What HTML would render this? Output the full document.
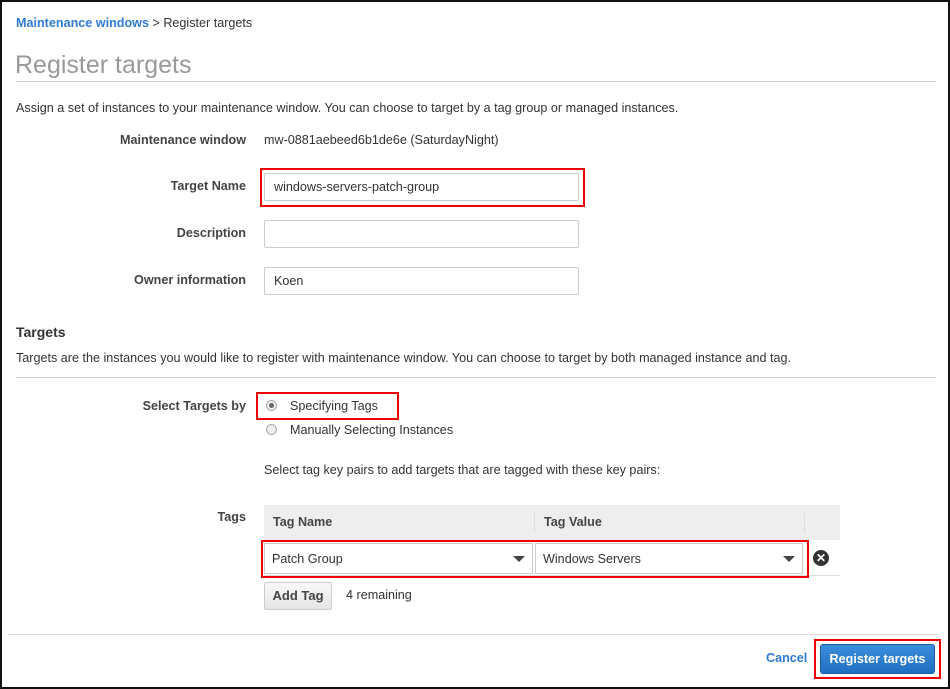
<!DOCTYPE html>
<html><head><style>
body{margin:0;width:950px;height:688px;overflow:hidden;background:#fff;font-family:"Liberation Sans",Arial,sans-serif;font-size:12.6px;color:#333;position:relative}
.a{position:absolute;white-space:nowrap}
.frame{position:absolute;left:0;top:0;width:946px;height:685px;border:2px solid #111}
.lbl{position:absolute;width:246px;left:0;text-align:right;font-weight:bold;color:#444}
.inp{position:absolute;left:264px;width:315px;height:28px;border:1px solid #ccc;border-radius:2px;box-sizing:border-box;padding:6px 9px;font-size:12.6px}
.red{position:absolute;border:2px solid #e00;box-sizing:border-box}
.hr{position:absolute;height:1px;background:#ccc}
.radio{position:absolute;width:9px;height:9px;border-radius:50%;border:1px solid #aaa;background:#eee}
.sel{position:absolute;top:543px;height:31px;border:1px solid #ccc;box-sizing:border-box;padding:8px 7px;background:#fff}
.tri{position:absolute;right:7px;top:12px;border-left:6px solid transparent;border-right:6px solid transparent;border-top:6px solid #444}
</style></head><body>
<div class="frame"></div>
<div class="a" style="left:16px;top:16px"><span style="color:#2f7bd1;font-weight:bold">Maintenance windows</span> &gt; Register targets</div>
<div class="a" style="left:15px;top:51px;font-size:25px;color:#999">Register targets</div>
<div class="hr" style="left:16px;top:81px;width:920px;background:#ccc"></div>
<div class="a" style="left:16px;top:101px">Assign a set of instances to your maintenance window. You can choose to target by a tag group or managed instances.</div>
<div class="lbl" style="top:133px">Maintenance window</div>
<div class="a" style="left:264px;top:133px">mw-0881aebeed6b1de6e (SaturdayNight)</div>
<div class="lbl" style="top:179px">Target Name</div>
<div class="inp" style="top:173px">windows-servers-patch-group</div>
<div class="red" style="left:260px;top:168px;width:325px;height:39px"></div>
<div class="lbl" style="top:226px">Description</div>
<div class="inp" style="top:220px"></div>
<div class="lbl" style="top:273px">Owner information</div>
<div class="inp" style="top:267px">Koen</div>
<div class="a" style="left:16px;top:324px;font-size:14px;font-weight:bold">Targets</div>
<div class="a" style="left:16px;top:351px">Targets are the instances you would like to register with maintenance window. You can choose to target by both managed instance and tag.</div>
<div class="hr" style="left:16px;top:377px;width:920px"></div>
<div class="lbl" style="top:399px">Select Targets by</div>
<div class="radio" style="left:266px;top:400px"><div style="position:absolute;left:2px;top:2px;width:5px;height:5px;border-radius:50%;background:#666"></div></div>
<div class="a" style="left:290px;top:399px">Specifying Tags</div>
<div class="red" style="left:256px;top:392px;width:143px;height:28px"></div>
<div class="radio" style="left:266px;top:424px"></div>
<div class="a" style="left:290px;top:423px">Manually Selecting Instances</div>
<div class="a" style="left:264px;top:463px">Select tag key pairs to add targets that are tagged with these key pairs:</div>
<div class="lbl" style="top:510px">Tags</div>
<div style="position:absolute;left:264px;top:505px;width:576px;height:35px;background:#eee"></div>
<div style="position:absolute;left:534px;top:513px;width:1px;height:20px;background:#ddd"></div>
<div style="position:absolute;left:804px;top:513px;width:1px;height:20px;background:#ddd"></div>
<div class="a" style="left:273px;top:515px;font-weight:bold;color:#444">Tag Name</div>
<div class="a" style="left:544px;top:515px;font-weight:bold;color:#444">Tag Value</div>
<div class="hr" style="left:264px;top:575px;width:576px;background:#ddd"></div>
<div class="sel" style="left:264px;width:269px">Patch Group<div class="tri"></div></div>
<div class="sel" style="left:535px;width:268px">Windows Servers<div class="tri"></div></div>
<div class="red" style="left:261px;top:540px;width:548px;height:38px"></div>
<div style="position:absolute;left:813px;top:550px;width:16px;height:16px;border-radius:50%;background:#333;color:#fff;font-size:12px;font-weight:bold;line-height:16px;text-align:center">✕</div>
<div style="position:absolute;left:264px;top:582px;width:68px;height:28px;box-sizing:border-box;border:1px solid #ccc;border-radius:2px;background:linear-gradient(#f8f8f8,#e6e6e6);font-weight:bold;text-align:center;line-height:26px;color:#444;font-size:13px">Add Tag</div>
<div class="a" style="left:346px;top:588px">4 remaining</div>
<div class="hr" style="left:8px;top:634px;width:932px;background:#ddd"></div>
<div class="a" style="left:766px;top:651px;color:#2f7bd1;font-weight:bold">Cancel</div>
<div style="position:absolute;left:820px;top:644px;width:115px;height:30px;box-sizing:border-box;border:1px solid #1a5ea8;border-radius:3px;background:linear-gradient(#3c8fdc,#1f6ec2);color:#fff;font-weight:bold;text-align:center;line-height:28px">Register targets</div>
<div class="red" style="left:814px;top:639px;width:127px;height:40px"></div>
</body></html>
